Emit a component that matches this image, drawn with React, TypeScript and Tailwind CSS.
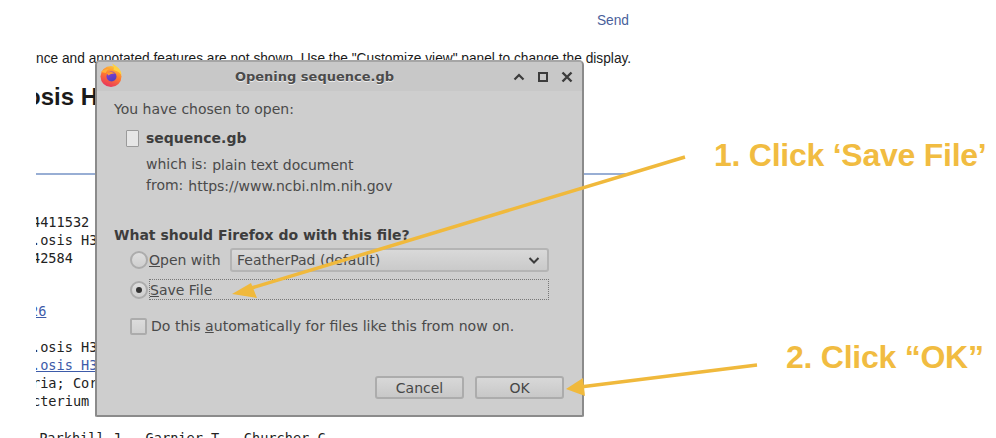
import React from "react";

const sans = "[font-family:'DejaVu_Sans',sans-serif]";

function MonoRow({ y, children, className = "" }: { y: number; children?: React.ReactNode; className?: string }) {
  return (
    <div className={"h-[18px] leading-[18px] whitespace-pre " + className} style={{ marginTop: y }}>
      {children}
    </div>
  );
}

function FirefoxLogo() {
  return (
    <svg width="26" height="26" viewBox="0 0 26 26" className="absolute left-[1px] top-[0px]">
      <defs>
        <linearGradient id="ff1" x1="0.7" y1="0" x2="0.3" y2="1">
          <stop offset="0" stopColor="#ffc83a" />
          <stop offset="0.45" stopColor="#ff7a2e" />
          <stop offset="1" stopColor="#e8315f" />
        </linearGradient>
        <linearGradient id="ff2" x1="0.3" y1="0" x2="0.7" y2="1">
          <stop offset="0" stopColor="#8a3fd0" />
          <stop offset="1" stopColor="#4a3fc0" />
        </linearGradient>
      </defs>
      <circle cx="13" cy="14.5" r="10.5" fill="url(#ff1)" />
      <path d="M14 1.5 C19 4 23.5 8 23.5 13 C21 9 18 9 15.5 8 C16.5 6 15.5 4 14 1.5Z" fill="#ffd23f" />
      <path d="M3 10 C5 7.5 8 6.5 11 7 C9 8.5 8 10 8 11 C6 10.5 4.5 10.5 3 10Z" fill="#ffb13a" />
      <circle cx="13.5" cy="14.5" r="5" fill="url(#ff2)" />
      <path d="M8.5 11 C11 9.5 15 9.5 17 11.5 C14.5 11.3 12 12 10.5 13.5 Z" fill="#ff9a2e" />
    </svg>
  );
}

function Radio({ checked }: { checked?: boolean }) {
  return (
    <span className="flex h-[18px] w-[18px] shrink-0 items-center justify-center rounded-full border-2 border-[#acacac] bg-gradient-to-b from-[#dedede] to-[#cfcfcf]">
      {checked && <span className="h-[6px] w-[6px] rounded-full bg-[#333333]" />}
    </span>
  );
}

function Btn({ label }: { label: string }) {
  return (
    <div className="flex h-[23px] w-[89px] items-center justify-center rounded-[3px] border-2 border-[#acacac] bg-gradient-to-b from-[#d8d8d8] to-[#c8c8c8] text-[14px] text-[#474747]">
      {label}
    </div>
  );
}

export default function App() {
  return (
    <div className="relative h-[438px] w-[996px] overflow-hidden bg-white">
      {/* page behind the dialog */}
      <div className="ml-[36px] h-[438px] w-[600px] overflow-hidden font-['Liberation_Sans',sans-serif] text-[#1a1a1a]">
        <div className="flex h-[29px] items-end justify-end pr-[7px] text-[13.75px] leading-[16px] text-[#4a5f9b]">Send</div>
        <div className="mt-[22px] h-[16px] whitespace-nowrap text-[13.72px] leading-[16px]">
          nce and annotated features are not shown. Use the "Customize view" panel to change the display.
        </div>
        <div className="-ml-[10px] mt-[16px] h-[28px] text-[24px] font-bold leading-[28px]">osis H</div>
        <div className="mr-[9px] mt-[62px] h-[2px] bg-[#98aed4]" />
        <div className="-ml-[4px] font-['DejaVu_Sans_Mono',monospace] text-[13.6px] text-[#222222]">
          <MonoRow y={38}>4411532</MonoRow>
          <MonoRow y={0}>.osis H3</MonoRow>
          <MonoRow y={0}>42584</MonoRow>
          <MonoRow y={35} className="-ml-[2px] text-[#3d5ba9] underline">26</MonoRow>
          <MonoRow y={18}>.osis H3</MonoRow>
          <MonoRow y={0} className="text-[#3d5ba9] underline">.osis H3</MonoRow>
          <MonoRow y={0}>ria; Cor</MonoRow>
          <MonoRow y={0}>cterium</MonoRow>
          <MonoRow y={19} className="-ml-[1px]"> Parkhill J., Garnier T., Churcher C.</MonoRow>
        </div>
      </div>

      {/* dialog window */}
      <div className={"absolute left-[95px] top-[60px] flex h-[357px] w-[489px] flex-col rounded-t-[5px] rounded-b-[2px] border-2 border-[#8b8b8b] border-t-[#a5a5a5] bg-[#cecece] text-[#4a4a4a] " + sans}>
        <div className="relative flex h-[29px] shrink-0 items-center justify-center rounded-t-[4px] bg-[#c8c8c8] pr-[50px]">
          <FirefoxLogo />
          <span className="text-[13px] font-bold text-[#4b4b4b] [text-shadow:0_1px_0_#eeeeee]">Opening sequence.gb</span>
          <div className="absolute right-[8px] top-[8px] flex items-center gap-[10px]">
            <svg width="14" height="14" viewBox="0 0 14 14" fill="none" stroke="#3c3c3c" strokeWidth="2.2"><path d="M2.5 9.5 7 5l4.5 4.5" /></svg>
            <svg width="14" height="14" viewBox="0 0 14 14" fill="none" stroke="#3c3c3c" strokeWidth="2"><rect x="3" y="3" width="8" height="8" /></svg>
            <svg width="14" height="14" viewBox="0 0 14 14" fill="none" stroke="#3c3c3c" strokeWidth="2.4"><path d="M2.5 2.5l9 9M11.5 2.5l-9 9" /></svg>
          </div>
        </div>
        <div className="flex flex-1 flex-col pl-[17px] pr-[33px] text-[14px] leading-[18px]">
          <div className="mt-[9px]">You have chosen to open:</div>
          <div className="ml-[12px] mt-[11px] flex items-center gap-[7px]">
            <span className="h-[17px] w-[13px] rounded-[1px] border border-[#9a9a9a] bg-[#e6e6e6]" />
            <span className="font-bold text-[#3d3d3d]">sequence.gb</span>
          </div>
          <div className="ml-[32px] mt-[9px] flex items-center gap-[5px]">
            <span className="-mt-[2px]">which is:</span><span>plain text document</span>
          </div>
          <div className="ml-[32px] mt-[3px] flex items-center gap-[5px]">
            <span className="-mt-[2px]">from:</span><span>https://www.ncbi.nlm.nih.gov</span>
          </div>
          <div className="mt-[31px] font-bold text-[#3d3d3d]">What should Firefox do with this file?</div>
          <div className="ml-[16px] mt-[4px] flex h-[24px] items-center gap-[1px]">
            <Radio />
            <span className="w-[80px]"><u>O</u>pen with</span>
            <div className="flex h-[24px] w-[319px] items-center justify-between rounded-[3px] border-2 border-[#b4b4b4] bg-gradient-to-b from-[#d9d9d9] to-[#cacaca] pl-[5px] pr-[6px]">
              <span className="-mt-[1px]">FeatherPad (default)</span>
              <svg width="14" height="14" viewBox="0 0 14 14" fill="none" stroke="#3c3c3c" strokeWidth="2"><path d="M2.5 5 7 9.5 11.5 5" /></svg>
            </div>
          </div>
          <div className="ml-[16px] mt-[7px] flex h-[21px] items-center gap-[1px]">
            <Radio checked />
            <span className="flex h-[21px] w-[401px] items-center border border-dotted border-[#777777]"><span><u>S</u>ave File</span></span>
          </div>
          <div className="ml-[16px] mt-[17px] flex h-[18px] items-center gap-[4px]">
            <span className="h-[17px] w-[17px] rounded-[2px] border-2 border-[#acacac] bg-gradient-to-b from-[#dcdcdc] to-[#d0d0d0]" />
            <span className="text-[14.08px]">Do this <u>a</u>utomatically for files like this from now on.</span>
          </div>
          <div className="mt-[41px] flex justify-end gap-[11px] -mr-[15px]">
            <Btn label="Cancel" />
            <Btn label="OK" />
          </div>
        </div>
      </div>

      {/* annotation arrows */}
      <svg width="996" height="438" viewBox="0 0 996 438" className="pointer-events-none absolute left-0 top-0">
        <line x1="685" y1="157" x2="245" y2="290" stroke="#f0b93c" strokeWidth="3.5" />
        <polygon points="232,294 251,283 257,298" fill="#f0b93c" />
        <line x1="757" y1="365" x2="580" y2="387" stroke="#f0b93c" strokeWidth="3.5" />
        <polygon points="566,389 583,378 585,396" fill="#f0b93c" />
      </svg>

      {/* annotation labels */}
      <div className="absolute left-[714px] top-[137px] whitespace-nowrap font-['Liberation_Sans',sans-serif] text-[32px] font-bold leading-[36px] tracking-[-0.25px] text-[#f1bc41]">1. Click ‘Save File’</div>
      <div className="absolute left-[786px] top-[339px] whitespace-nowrap font-['Liberation_Sans',sans-serif] text-[32px] font-bold leading-[36px] tracking-[-0.25px] text-[#f1bc41]">2. Click “OK”</div>
    </div>
  );
}
